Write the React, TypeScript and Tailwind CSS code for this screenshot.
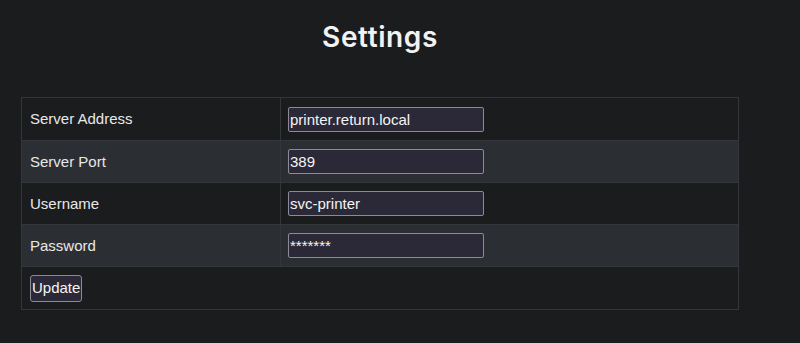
import { useState } from "react";

const rows = [
  { label: "Server Address", value: "printer.return.local", type: "text" },
  { label: "Server Port", value: "389", type: "text" },
  { label: "Username", value: "svc-printer", type: "text" },
  { label: "Password", value: "*******", type: "text" },
];

export default function App() {
  const [values, setValues] = useState(rows.map((r) => r.value));

  return (
    <div
      className="min-h-[343px] w-[800px] bg-[#1b1c1e] text-[#eeeeee]"
      style={{ fontFamily: '"Liberation Sans", Arial, sans-serif' }}
    >
      <div className="ml-[21px] w-[718px] pt-[19px]">
        <h1
          className="text-center text-[28px] font-semibold leading-[36px] tracking-[0.6px] text-[#f2f2f2]"
          style={{ fontFamily: 'Inter, "Noto Sans", sans-serif' }}
        >
          Settings
        </h1>

        <table className="mt-[42px] w-full border-collapse border border-[#3a3d41] text-[15px]">
          <tbody>
            {rows.map((r, i) => (
              <tr key={r.label} className={i % 2 === 1 ? "bg-[#2b2f33]" : "bg-[#1b1c1e]"}>
                <td
                  className={
                    (i === 0 ? "h-[43px] " : "h-[42px] ") +
                    "w-[259px] border border-[#33373b] px-[8px] pt-[1px] align-middle text-[#e8e8e8]"
                  }
                >
                  {r.label}
                </td>
                <td className="border border-[#33373b] px-[7px] align-middle">
                  <input
                    type={r.type}
                    value={values[i]}
                    onChange={(e) => {
                      const next = [...values];
                      next[i] = e.target.value;
                      setValues(next);
                    }}
                    className="block h-[25px] w-[196px] rounded-[2px] border border-[#8b8a96] bg-[#2b2937] px-[1px] text-[15px] text-[#f4f4f4] outline-none"
                  />
                </td>
              </tr>
            ))}
            <tr className="bg-[#1b1c1e]">
              <td colSpan={2} className="h-[43px] border border-[#33373b] px-[8px] align-middle">
                <button className="h-[27px] rounded-[3px] border border-[#8b8a96] bg-[#2b2937] px-[1px] text-[15px] text-[#f4f4f4]">
                  Update
                </button>
              </td>
            </tr>
          </tbody>
        </table>
      </div>
    </div>
  );
}
